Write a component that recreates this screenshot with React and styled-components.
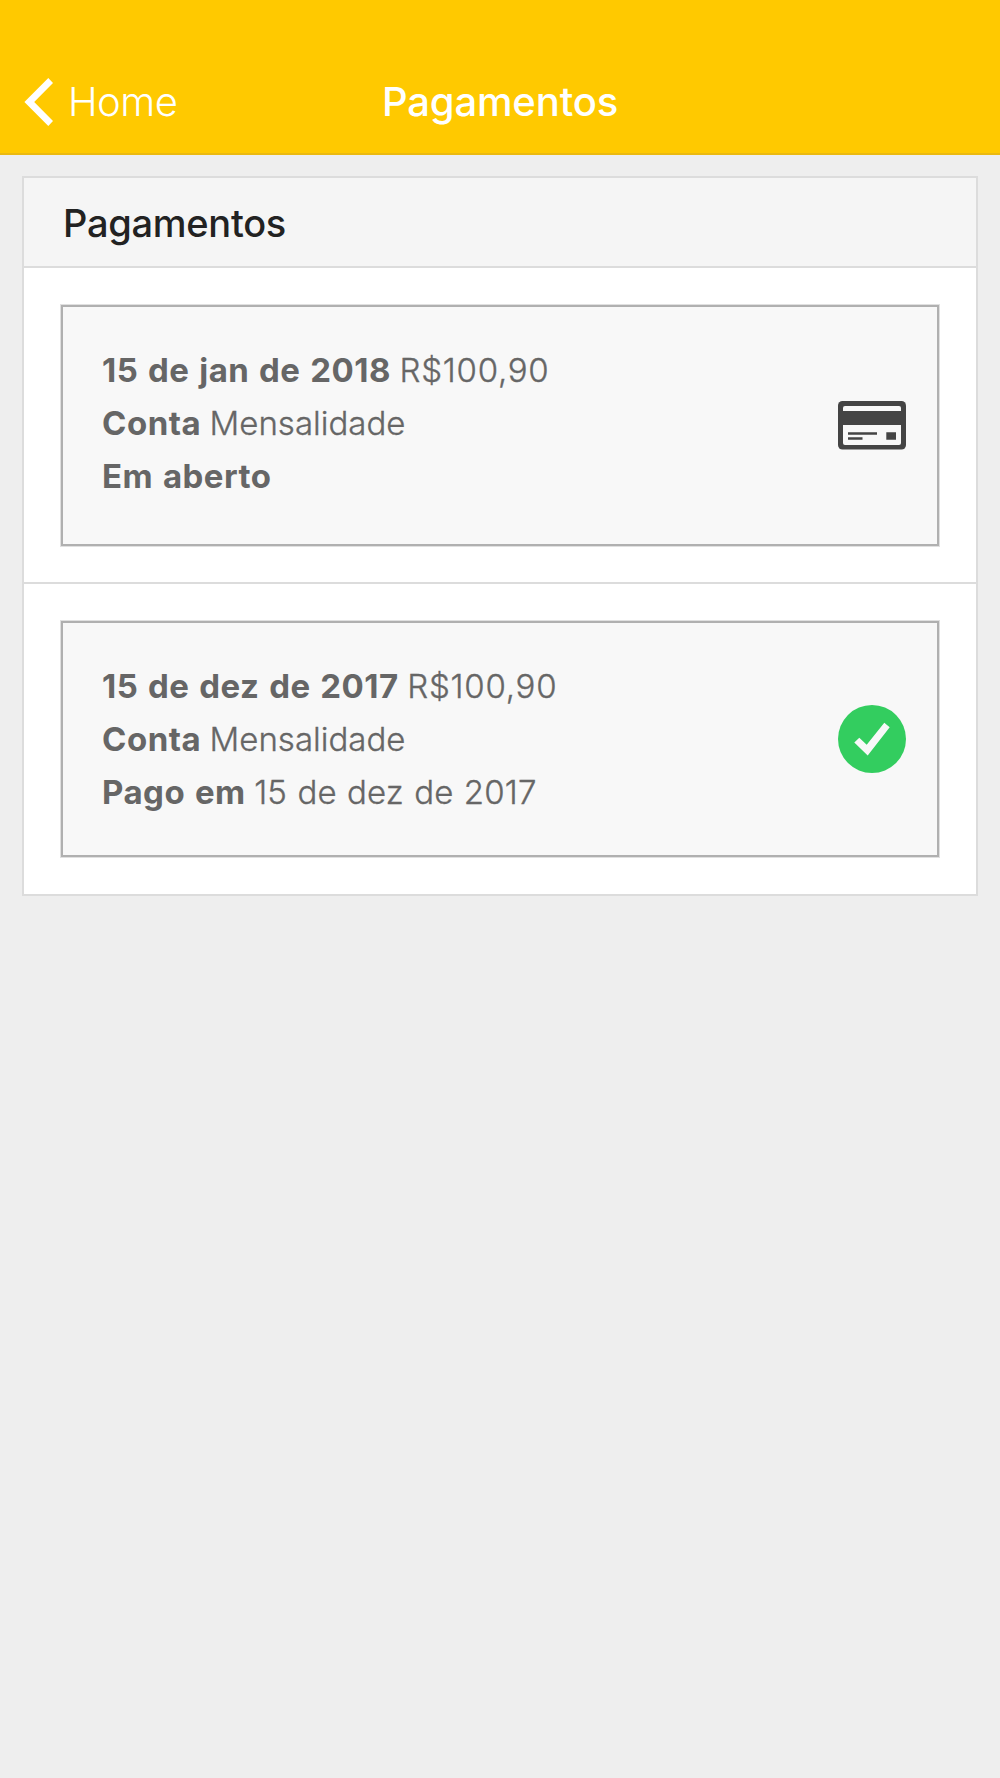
import React from 'react';
import styled, { createGlobalStyle } from 'styled-components';

const GlobalStyle = createGlobalStyle`
  * {
    box-sizing: border-box;
  }

  body {
    margin: 0;
    background: #eeeeee;
    font-family: Inter, Roboto, 'Liberation Sans', sans-serif;
    -webkit-font-smoothing: antialiased;
  }
`;

const Page = styled.div`
  min-height: 1778px;
  background: #eeeeee;
`;

const NavBar = styled.header`
  display: grid;
  grid-template-columns: 1fr auto 1fr;
  align-items: center;
  height: 155px;
  padding: 51px 24px 0;
  background: #ffc900;
  border-bottom: 2px solid #ebb910;
  color: #ffffff;
`;

const BackButton = styled.button`
  display: flex;
  align-items: center;
  gap: 15px;
  padding: 0;
  border: none;
  background: transparent;
  color: inherit;
  font-family: inherit;
  font-size: 40px;
  font-weight: 300;
  line-height: 48px;
  letter-spacing: -0.5px;
  cursor: pointer;
`;

const NavTitle = styled.h1`
  margin: 0;
  font-size: 40px;
  font-weight: 500;
  line-height: 48px;
  letter-spacing: -0.15px;
`;

const Card = styled.section`
  margin: 21px 22px 0;
  padding-bottom: 1px;
  border: 2px solid #dcdcdc;
  background: #ffffff;
`;

const CardHeader = styled.h2`
  margin: 0;
  height: 90px;
  padding: 0 39px;
  background: #f5f5f5;
  border-bottom: 2px solid #dcdcdc;
  color: #222222;
  font-size: 38px;
  font-weight: 500;
  line-height: 91px;
  letter-spacing: -0.28px;
`;

const CardItem = styled.div`
  padding: 37px 37px 36px;

  & + & {
    border-top: 2px solid #dcdcdc;
  }
`;

const Payment = styled.article`
  display: flex;
  align-items: center;
  justify-content: space-between;
  height: ${props => props.$height}px;
  padding: 0 31px 0 39px;
  border: 2px solid #b0b0b0;
  background: #f8f8f8;
  box-shadow: 0 0 0 1px rgba(0, 0, 0, 0.12);
`;

const PaymentInfo = styled.div`
  align-self: flex-start;
  padding-top: 36.5px;
  color: #666666;
  font-size: 33px;
  line-height: 53px;
`;

const Line = styled.p`
  margin: 0;
  font-weight: 300;
  word-spacing: -0.8px;
  white-space: nowrap;
  -webkit-text-stroke: 0.35px #666666;
`;

const Label = styled.strong`
  font-weight: 700;
  letter-spacing: 0.5px;
  word-spacing: 1.4px;
  -webkit-text-stroke: 0;
`;

const Amount = styled.span`
  letter-spacing: 0.75px;
`;

const PaidDate = styled.span`
  letter-spacing: 0.15px;
  word-spacing: 0.9px;
`;

const BackIcon = () => (
  <svg width="29" height="48" viewBox="0 0.5 29 48">
    <path d="M0.4 24.5 L24.3 0.5 L29 5.4 L10.2 24.5 L29 43.6 L24.3 48.500 Z" fill="#ffffff" />
  </svg>
);

const CardIcon = () => (
  <svg width="68" height="49" viewBox="0 0 68 49">
    <rect width="68" height="48.500" rx="4.5" fill="#444444" />
    <path d="M5 10V7a2 2 0 0 1 2-2h54a2 2 0 0 1 2 2v3z" fill="#f8f8f8" />
    <path d="M5 24h58v18a2 2 0 0 1-2 2H7a2 2 0 0 1-2-2z" fill="#f8f8f8" />
    <path d="M10 31.200h29v2.500H10zM10 36.200h14.500v2.500H10zM48.300 31.200h9.700v7.500h-9.700z" fill="#444444" />
  </svg>
);

const PaidIcon = () => (
  <svg width="68" height="68" viewBox="0 0 68 68">
    <circle cx="34" cy="34" r="34" fill="#33cd5f" />
    <path d="M46.300 17.700 L51.700 22.200 L29.700 50.500 L16.300 37.600 L21.300 32.700 L28.700 39.800 Z" fill="#f8f8f8" />
  </svg>
);

const payments = [
  {
    id: 1,
    date: '15 de jan de 2018',
    amount: 'R$100,90',
    account: 'Mensalidade',
    status: 'Em aberto',
    height: 241,
  },
  {
    id: 2,
    date: '15 de dez de 2017',
    amount: 'R$100,90',
    account: 'Mensalidade',
    status: 'Pago em',
    paidAt: '15 de dez de 2017',
    height: 236,
  },
];

const App = () => {
  return (
    <Page>
      <GlobalStyle />
      <NavBar>
        <BackButton>
          <BackIcon />
          Home
        </BackButton>
        <NavTitle>Pagamentos</NavTitle>
      </NavBar>

      <Card>
        <CardHeader>Pagamentos</CardHeader>
        {payments.map((payment) => (
          <CardItem key={payment.id}>
            <Payment $height={payment.height}>
              <PaymentInfo>
                <Line>
                  <Label>{payment.date}</Label> <Amount>{payment.amount}</Amount>
                </Line>
                <Line>
                  <Label>Conta</Label> {payment.account}
                </Line>
                <Line>
                  <Label>{payment.status}</Label> <PaidDate>{payment.paidAt}</PaidDate>
                </Line>
              </PaymentInfo>
              {payment.paidAt ? <PaidIcon /> : <CardIcon />}
            </Payment>
          </CardItem>
        ))}
      </Card>
    </Page>
  );
};

export default App;
